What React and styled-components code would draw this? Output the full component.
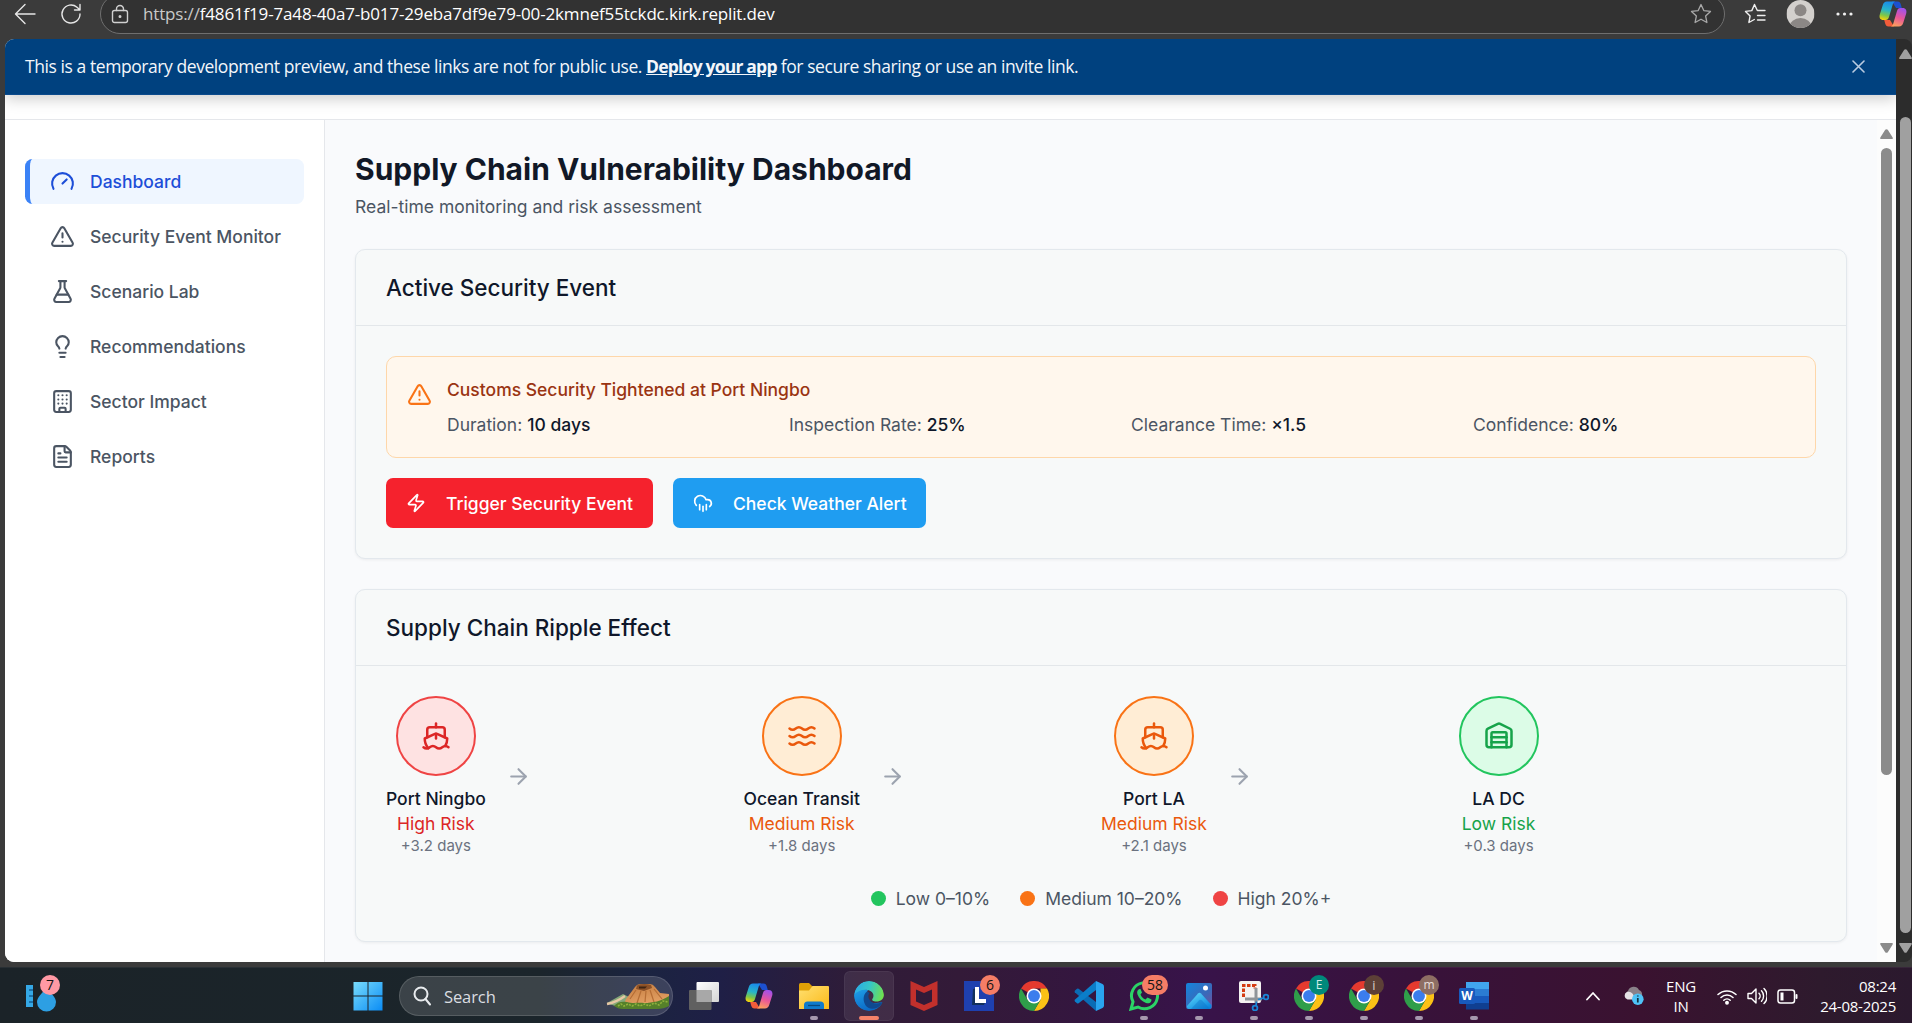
import React from "react";
import styled, { createGlobalStyle } from "styled-components";
import {
  Gauge, TriangleAlert, FlaskConical, Lightbulb, Building, FileText,
  Zap, CloudRain, Ship, Waves, Warehouse, ArrowRight,
} from "lucide-react";

const GlobalStyle = createGlobalStyle`
  * { box-sizing: border-box; }
  body {
    margin: 0;
    overflow: hidden;
    background: #3b3b3b;
    font-family: Inter, "Liberation Sans", sans-serif;
    font-size: 17.5px;
    line-height: 25px;
  }
  svg { display: block; flex-shrink: 0; }
  h1, h2, p { margin: 0; }
`;

const SYSTEM = `"Open Sans", "Noto Sans", sans-serif`;

const Screen = styled.div`
  width: 1912px;
  height: 1023px;
  display: flex;
  flex-direction: column;
  overflow: hidden;
`;

/* ---------- Browser toolbar ---------- */

const Toolbar = styled.div`
  height: 39px;
  padding: 0 5px 11px 14px;
  display: flex;
  align-items: center;
  overflow: hidden;
  background: #3b3b3b;
  flex-shrink: 0;
`;
const ToolIcons = styled.div`
  display: flex;
  align-items: center;
  gap: 24px;
  width: 86px;
`;
const AddressBar = styled.div`
  width: 1625px;
  height: 40px;
  flex-shrink: 0;
  display: flex;
  align-items: center;
  padding: 0 12px 0 10px;
  border: 1px solid #6f6f6f;
  border-radius: 20px;
  background: #323232;
`;
const Url = styled.span`
  flex: 1;
  margin-left: 14px;
  padding-bottom: 2px;
  font-family: ${SYSTEM};
  font-size: 17px;
  letter-spacing: -0.16px;
  color: #fff;
  white-space: nowrap;
`;
const Scheme = styled.span`
  color: #c9c9c9;
`;
const ToolEnd = styled.div`
  display: grid;
  grid-template-columns: 42px 50px 43px 28px;
  align-items: center;
  margin-left: 19px;
`;

/* ---------- Page frame ---------- */

const Viewport = styled.div`
  height: 923px;
  padding-left: 5px;
  display: flex;
  flex-shrink: 0;
`;
const Page = styled.div`
  width: 1891px;
  display: flex;
  flex-direction: column;
  border-radius: 9px 0 0 9px;
  overflow: hidden;
  background: #fff;
`;
const Banner = styled.div`
  height: 56px;
  flex-shrink: 0;
  display: flex;
  align-items: center;
  justify-content: space-between;
  padding: 0 31px 0 20px;
  background: #00417f;
  border-bottom: 1px solid #0b4a8c;
  box-shadow: 0 4px 14px rgba(0, 0, 0, 0.2);
  font-family: ${SYSTEM};
  font-size: 17.5px;
  letter-spacing: -0.43px;
  color: #f3f6fa;
  position: relative;
`;
const BannerLink = styled.a`
  font-weight: 700;
  letter-spacing: -0.8px;
  text-decoration: underline;
`;
const SiteHeader = styled.div`
  height: 25px;
  flex-shrink: 0;
  border-bottom: 1px solid #e5e7eb;
  box-shadow: 0 1px 2px rgba(0, 0, 0, 0.06);
`;
const Columns = styled.div`
  flex: 1;
  display: flex;
  min-height: 0;
`;
const Sidebar = styled.nav`
  width: 320px;
  padding: 39px 20px 0;
  border-right: 1px solid #e5e7eb;
  display: flex;
  flex-direction: column;
  gap: 10px;
  background: #fff;
`;
const NavItem = styled.div`
  height: 45px;
  display: flex;
  align-items: center;
  gap: 15px;
  padding-left: 20px;
  border-left: 5px solid ${(p) => (p.$active ? "#3b82f6" : "transparent")};
  border-radius: 7.5px;
  background: ${(p) => (p.$active ? "#eff6ff" : "transparent")};
  color: ${(p) => (p.$active ? "#1d4ed8" : "#4b5563")};
  font-weight: 500;
`;
const Main = styled.main`
  flex: 1;
  padding: 29px 30px 0;
  background: #f9fafc;
  display: flex;
  flex-direction: column;
  gap: 30px;
`;
const Title = styled.h1`
  font-size: 30px;
  line-height: 40px;
  font-weight: 700;
  color: #111827;
`;
const Subtitle = styled.p`
  margin-top: 5px;
  color: #4b5563;
`;

/* ---------- Cards ---------- */

const Card = styled.section`
  border: 1px solid #e3e8ed;
  border-radius: 10px;
  background: #f7f9f9;
  box-shadow: 0 1px 3px rgba(0, 0, 0, 0.06);
`;
const CardHead = styled.h2`
  height: 76px;
  padding: 0 30px;
  display: flex;
  align-items: center;
  border-bottom: 1px solid #e3e7ea;
  font-size: 22.5px;
  font-weight: 500;
  color: #0f172a;
`;
const CardBody = styled.div`
  padding: 30px;
`;
const Alert = styled.div`
  padding: 20px;
  display: flex;
  gap: 15px;
  border: 1px solid #fed7aa;
  border-radius: 10px;
  background: #fff7ed;
  color: #f97316;
  svg { margin-top: 5px; }
`;
const AlertText = styled.div`
  flex: 1;
`;
const AlertTitle = styled.div`
  font-weight: 500;
  color: #9a3412;
`;
const Facts = styled.div`
  margin-top: 10px;
  display: grid;
  grid-template-columns: repeat(4, 1fr);
  gap: 20px;
`;
const Fact = styled.div`
  color: #4b5563;
  b { font-weight: 500; color: #0f172a; }
`;
const Actions = styled.div`
  margin-top: 20px;
  display: flex;
  gap: 20px;
`;
const Action = styled.button`
  width: ${(p) => p.$w}px;
  height: 50px;
  padding: 0 20px;
  display: flex;
  align-items: center;
  gap: 20px;
  border: 0;
  border-radius: 7px;
  background: ${(p) => p.$bg};
  color: #fff;
  font: 500 17.5px Inter, sans-serif;
  white-space: nowrap;
`;

/* ---------- Ripple ---------- */

const Chain = styled.div`
  display: grid;
  grid-template-columns: repeat(4, 1fr);
`;
const Stage = styled.div`
  display: flex;
  align-items: center;
  gap: 20px;
  color: #9ca3af;
`;
const Node = styled.div`
  display: flex;
  flex-direction: column;
  align-items: center;
  white-space: nowrap;
`;
const Disc = styled.div`
  width: 80px;
  height: 80px;
  margin-bottom: 10px;
  display: flex;
  align-items: center;
  justify-content: center;
  border: 2px solid ${(p) => p.$edge};
  border-radius: 50%;
  background: ${(p) => p.$fill};
  color: ${(p) => p.$ink};
`;
const NodeName = styled.div`
  font-weight: 500;
  color: #0f172a;
`;
const Risk = styled.div`
  color: ${(p) => p.$ink};
`;
const Delay = styled.div`
  font-size: 15px;
  line-height: 20px;
  color: #6b7280;
`;
const Legend = styled.div`
  margin-top: 30px;
  display: flex;
  justify-content: center;
  gap: 30px;
  color: #4b5563;
`;
const Key = styled.div`
  display: flex;
  align-items: center;
  gap: 10px;
  &::before {
    content: "";
    width: 15px;
    height: 15px;
    border-radius: 50%;
    background: ${(p) => p.$c};
  }
`;

/* ---------- Scrollbars ---------- */

const Track = styled.div`
  width: ${(p) => p.$w}px;
  flex-shrink: 0;
  display: flex;
  flex-direction: column;
  align-items: center;
  padding: ${(p) => p.$top}px 0 9px ${(p) => p.$inset}px;
  background: ${(p) => p.$bg};
  border-radius: ${(p) => p.$r || 0};
`;
const Thumb = styled.div`
  width: 11px;
  height: ${(p) => p.$h}px;
  margin: ${(p) => p.$gap}px 0 auto;
  border-radius: 6px;
  background: ${(p) => p.$c};
`;

/* ---------- Taskbar ---------- */

const Strip = styled.div`
  height: 5px;
  flex-shrink: 0;
  background: #3b3b3b;
`;
const Taskbar = styled.div`
  height: 56px;
  flex-shrink: 0;
  display: flex;
  align-items: center;
  padding-top: 1px;
  color: #fff;
  font-family: ${SYSTEM};
  background: linear-gradient(90deg, #1b2328 0, #1b252b 540px, #1b2440 640px, #1f1f46 720px, #301c38 860px, #331a38 960px, #34163f 1080px, #38134a 1200px, #38123a 1420px, #3a1230 1640px, #2e1a2d 1820px, #2b192e 1912px);
  border-top: 1px solid rgba(255, 255, 255, 0.06);
`;
const Widgets = styled.div`
  width: 343px;
  flex-shrink: 0;
  padding-left: 16px;
`;
const Apps = styled.div`
  display: flex;
  flex-shrink: 0;
  align-items: center;
  gap: 5px;
`;
const Tile = styled.div`
  position: relative;
  width: 50px;
  height: 50px;
  flex-shrink: 0;
  display: flex;
  align-items: center;
  justify-content: center;
  border-radius: 6px;
  background: ${(p) => (p.$active ? "rgba(255,255,255,0.08)" : "transparent")};
  box-shadow: ${(p) => (p.$active ? "inset 0 0 0 1px rgba(255,255,255,0.05)" : "none")};
`;
const Running = styled.span`
  position: absolute;
  bottom: 1px;
  left: 50%;
  width: ${(p) => (p.$active ? 20 : 8)}px;
  height: 4px;
  transform: translateX(-50%);
  border-radius: 2px;
  background: ${(p) => (p.$active ? "#f48269" : "#a698ae")};
`;
const Badge = styled.span`
  position: absolute;
  top: 4px;
  left: ${(p) => p.$x}px;
  min-width: 20px;
  height: 20px;
  padding: 0 ${(p) => p.$pad || 0}px;
  display: flex;
  align-items: center;
  justify-content: center;
  border-radius: 10px;
  background: ${(p) => p.$bg};
  color: ${(p) => p.$ink || "#141414"};
  font-size: ${(p) => p.$size || 14}px;
  line-height: 20px;
`;
const SearchBox = styled.div`
  width: 274px;
  height: 40px;
  margin: 0 1px;
  flex-shrink: 0;
  padding: 0 2px 0 13px;
  display: flex;
  align-items: center;
  border: 1px solid rgba(255, 255, 255, 0.14);
  border-radius: 20px;
  background: rgba(255, 255, 255, 0.14);
  color: #dadde1;
  font-size: 16.5px;
`;
const SearchLabel = styled.span`
  flex: 1;
  margin-left: 13px;
  letter-spacing: -0.1px;
`;
const Tray = styled.div`
  flex: 1;
  display: flex;
  align-items: center;
  padding: 0 16px 0 87px;
  font-size: 15px;
  line-height: 20px;
`;
const Sync = styled.div`
  margin-left: 23px;
`;
const Language = styled.div`
  width: 30px;
  margin: 0 21px;
  text-align: center;
  letter-spacing: -0.2px;
`;
const Status = styled.div`
  display: flex;
  align-items: center;
  gap: 10px;
`;
const Clock = styled.div`
  flex: 1;
  min-width: 0;
  display: flex;
  flex-direction: column;
  align-items: flex-end;
  letter-spacing: -0.25px;
  white-space: nowrap;
`;

/* ---------- Drawings ---------- */

const line = (c = "#e6e6e6", w = 1.4) => ({
  fill: "none", stroke: c, strokeWidth: w, strokeLinecap: "round", strokeLinejoin: "round",
});

const BackIcon = () => (
  <svg width="22" height="22" {...line()}><path d="M21 11H2M11 1.500 1.500 11l9.500 9.500" /></svg>
);
const ReloadIcon = () => (
  <svg width="22" height="22" {...line()}><path d="M20 11a9 9 0 1 1-3-6.700L19.500 6.500M20 1.500v5.500h-5.500" /></svg>
);
const LockIcon = () => (
  <svg width="18" height="20" {...line("#d0d0d0")}>
    <rect x="1.500" y="6.500" width="15" height="12" rx="2" />
    <path d="M5.500 6.500V5a3.500 3.500 0 0 1 7 0v1.500" />
    <circle cx="9" cy="12.500" r="0.800" fill="#d0d0d0" />
  </svg>
);
const STAR = "M11 1.500l2.800 6.100 6.700.8-4.900 4.500 1.300 6.600-5.900-3.300-5.900 3.300 1.300-6.600L1.500 8.400l6.700-.8z";
const StarIcon = () => (
  <svg width="22" height="22" {...line("#a8a8a8", 1.3)}><path d={STAR} /></svg>
);
const FavoritesIcon = () => (
  <svg width="22" height="22" {...line("#f0f0f0")}>
    <path d="M13.200 7.200 10.500 1.500 7.800 7.600l-6.300.8 4.600 4.500-1.200 6.600 5.400-3M13.500 7.500h7.500M13.500 12.500h7.500M13.500 17h7.500" />
  </svg>
);
const Avatar = () => (
  <svg width="29" height="28" viewBox="0 0 28 28">
    <clipPath id="face"><circle cx="14" cy="14" r="14" /></clipPath>
    <g clipPath="url(#face)">
      <rect width="28" height="28" fill="#d3d0cd" />
      <circle cx="14" cy="10.300" r="6" fill="#8b8785" />
      <ellipse cx="14" cy="27" rx="11" ry="9" fill="#8b8785" />
    </g>
  </svg>
);
const DotsIcon = () => (
  <svg width="18" height="6" fill="#f0f0f0">
    <circle cx="2" cy="3" r="1.600" /><circle cx="8.500" cy="3" r="1.600" /><circle cx="15" cy="3" r="1.600" />
  </svg>
);
const CopilotIcon = ({ id, size = 28 }) => (
  <svg width={size} height={size} viewBox="0 0 28 28">
    <defs>
      <linearGradient id={id + "a"} x1="0.500" y1="0" x2="0.300" y2="1">
        <stop offset="0" stopColor="#1a8be8" /><stop offset="0.450" stopColor="#28b5c8" />
        <stop offset="0.750" stopColor="#7cc64b" /><stop offset="1" stopColor="#f5d20a" />
      </linearGradient>
      <linearGradient id={id + "b"} x1="0.600" y1="0" x2="0.300" y2="1">
        <stop offset="0" stopColor="#a251ea" /><stop offset="0.500" stopColor="#e8559a" />
        <stop offset="1" stopColor="#fca05c" />
      </linearGradient>
    </defs>
    <path d="M13 1.500h5.500c2 0 2.700 1.200 3.300 3L22.800 8H17z" fill="#1c50cf" />
    <path d="M8 1.500h8c-1.500.8-2 2-2.500 3.800L10 17c-.6 2-1.500 3-3.500 3H4.500C1 20 0 17.500.8 14.500L3.800 5C4.500 2.700 5.800 1.500 8 1.500z" fill={`url(#${id}a)`} />
    <path d="M15 26.500H9.500c-2 0-2.700-1.200-3.300-3L5.200 20H11z" fill="#f25c3a" />
    <path d="M20 26.500h-8c1.500-.8 2-2 2.500-3.800L18 11c.6-2 1.500-3 3.500-3h2c3.500 0 4.500 2.500 3.700 5.500l-3 9.500c-.7 2.300-2 3.500-4.200 3.500z" fill={`url(#${id}b)`} />
  </svg>
);
const CloseIcon = () => (
  <svg width="13" height="13" {...line("#b9cbe0", 1.6)}><path d="M1 1l11 11M12 1 1 12" /></svg>
);
const ArrowHead = ({ c, down }) => (
  <svg width="13" height="10" fill={c}>
    <path d={down ? "M.6 0h11.800q.8.7.1 1.700L7.800 9.200q-1.300 1.200-2.600 0L.5 1.700Q-.2.7.6 0z" : "M.6 10h11.800q.8-.7.1-1.700L7.800.8Q6.500-.4 5.200.8L.5 8.300Q-.2 9.300.6 10z"} />
  </svg>
);

const WeatherIcon = () => (
  <svg width="32" height="32" viewBox="0 0 32 32">
    <rect x="1" y="5" width="7" height="22" fill="#35a8e6" />
    <path d="M4 10h4M4 16h4M4 22h4" stroke="#155f96" strokeWidth="1.500" />
    <path d="M21.500 8c-4 5-9.500 9-9.500 14a9.500 9.500 0 0 0 19 0C31 17 25.500 13 21.500 8z" fill="#2d9fe3" />
  </svg>
);
const WindowsIcon = () => (
  <svg width="30" height="30">
    <defs><linearGradient id="win" x1="0" y1="0" x2="1" y2="1"><stop offset="0" stopColor="#79dcfb" /><stop offset="1" stopColor="#0a8cf5" /></linearGradient></defs>
    <path fill="url(#win)" d="M.5 1h14v13.500H.5zM15.500 1h14v13.500h-14zM.5 15.500h14v14H.5zM15.500 15.500h14v14h-14z" />
  </svg>
);
const SearchIcon = () => (
  <svg width="18" height="20" fill="none" stroke="#e8ebee" strokeWidth="2" strokeLinecap="round">
    <circle cx="8" cy="8" r="6.500" /><path d="m12.500 13 4.500 5.500" />
  </svg>
);
const LandscapeIcon = () => (
  <svg width="64" height="28" viewBox="0 0 64 28">
    <defs>
      <linearGradient id="hill" x1="0" y1="0" x2="0.300" y2="1"><stop offset="0" stopColor="#c47c3f" /><stop offset="1" stopColor="#e5a266" /></linearGradient>
    </defs>
    <path d="M1 21 17 12l12 6-10 8-10-2z" fill="#86a87a" />
    <path d="M20 17 29 5q2-3 6-3h9q3 0 5 3l5 6 9 1v9l-21 4-24-3z" fill="url(#hill)" />
    <path d="M31 3.500q6-2.500 14-.5l1 3-8 3-8-2z" fill="#8c5127" />
    <path d="M33 4.500h8l-2 2h-6z" fill="#3f2413" />
    <path d="M30 8l-6 9M35 9l-4 12M40 9l-1 11M44 8l4 12M48 7l8 10" stroke="#b56d35" strokeWidth="1.200" />
    <path d="M8 24c3-4 8-5 13-4 7 2 11 0 17 1 9 0 17-2 25-7v10c-3 2-8 3-12 3H17c-4 0-6-1-9-3z" fill="#55802a" />
    <path d="M12 24l3-2 3 2 4-2 4 2 4-2 4 2 5-2 4 2 5-3 5 2 4-4 5 1" stroke="#8fb03c" strokeWidth="1.600" strokeDasharray="2 1.200" fill="none" />
    <path d="M1 22c6-1 11-3 18-8" stroke="#e6c8a4" strokeWidth="2.400" fill="none" />
  </svg>
);
const TaskViewIcon = () => (
  <svg width="30" height="30">
    <defs><linearGradient id="tv" x1="0" y1="0" x2="1" y2="1"><stop offset="0" stopColor="#fff" /><stop offset="1" stopColor="#d5d5d5" /></linearGradient></defs>
    <rect x="7.500" y="1" width="22.500" height="20" rx="1" fill="url(#tv)" />
    <rect x="0" y="9" width="22.500" height="20" rx="1" fill="#606060" />
    <rect x="7.500" y="9" width="15" height="12" fill="#a8a8a8" />
  </svg>
);
const FolderIcon = () => (
  <svg width="30" height="30">
    <defs><linearGradient id="fo" x1="0" y1="0" x2="1" y2="1"><stop offset="0" stopColor="#ffe071" /><stop offset="1" stopColor="#fbb918" /></linearGradient></defs>
    <path d="M0 3.500Q0 2 1.500 2H10l3.500 3.500v6H0z" fill="#dfa006" />
    <path d="M0 9.500h10L13.500 5H29q1 0 1 1v22H0z" fill="url(#fo)" />
    <path d="M5 28v-4q0-3.500 3.500-3.500h13q3.500 0 3.500 3.500v4z" fill="#0f7acb" />
    <path d="M9 24.500h12" stroke="#08497f" strokeWidth="1.300" />
  </svg>
);
const EdgeIcon = () => (
  <svg width="30" height="30" viewBox="0 0 30 30">
    <defs>
      <linearGradient id="ed1" x1="0" y1="0.300" x2="1" y2="0.500"><stop offset="0" stopColor="#2aa9e8" /><stop offset="0.500" stopColor="#36c6c6" /><stop offset="1" stopColor="#6fe04f" /></linearGradient>
      <linearGradient id="ed2" x1="0" y1="0" x2="0.500" y2="1"><stop offset="0" stopColor="#1fa0e8" /><stop offset="1" stopColor="#0b68c4" /></linearGradient>
      <clipPath id="edc"><circle cx="15" cy="15" r="15" /></clipPath>
    </defs>
    <g clipPath="url(#edc)">
      <path d="M0 14C3 8 9 7 14 9c-3 4-2 12 5 13 4 .5 8-1.500 9.500-.5C27 27 21 30 15 30 6.500 30 0 23 0 14z" fill="url(#ed2)" />
      <path d="M13 10.500C9 13.500 8.500 20 12 25c3 3.500 10 4 16-1.500 1-1.300.5-2.500-1-2-5 2.200-10.500.5-12.200-4-.8-2.500-.3-4.500 1-5.500z" fill="#10498f" />
      <path d="M0 14C1 6 7 0 15 0c9 0 15 6.500 15 13.500 0 4.500-3.500 7-7.500 7-3.500 0-5-1.300-4-2.700 2.500-3.500.3-8.300-6-9C7.500 8.300 3 10.300 0 14z" fill="url(#ed1)" />
    </g>
  </svg>
);
const McAfeeIcon = () => (
  <svg width="28" height="30"><path fill="#c2302c" d="M.5 0 14 6 27.500 0v24L14 30 .5 24zM6 8.500v12L14 24l8-3.500v-12L14 12z" fillRule="evenodd" /></svg>
);
const LetterAppIcon = () => (
  <svg width="30" height="30">
    <rect width="30" height="30" fill="#1e40af" />
    <path d="M9 8l4-1v12h9l-2 5H8z" fill="#12305c" />
    <path d="M11 6h4v12h7v4H11z" fill="#fff" />
  </svg>
);
const ChromeIcon = () => (
  <svg width="30" height="30" viewBox="0 0 48 48">
    <path d="M3.200 12A24 24 0 0 1 44.800 12H24L14 18z" fill="#e53a2f" />
    <path d="M44.800 12A24 24 0 0 1 24 48L34.400 30V12z" fill="#fbc116" />
    <path d="M24 48A24 24 0 0 1 3.200 12L13.600 30 34.400 30z" fill="#2f9e4a" />
    <circle cx="24" cy="24" r="12" fill="#fff" /><circle cx="24" cy="24" r="9.500" fill="#3b7ded" />
  </svg>
);
const CodeIcon = () => (
  <svg width="30" height="30" viewBox="0 0 30 30">
    <path d="M1 9.500 3 7.800q.8-.6 1.600 0L22 21v9L.8 11.200Q.2 10.300 1 9.500z" fill="#0a6cb5" />
    <path d="M1 20.500 3 22.200q.8.600 1.600 0L22 9V0L.8 18.800Q.2 19.700 1 20.500z" fill="#0b7ec9" />
    <path d="M22 0l6.500 3q1.500.8 1.500 2.500v19q0 1.700-1.500 2.500L22 30z" fill="#29a4ef" />
  </svg>
);
const WhatsAppIcon = () => (
  <svg width="30" height="30" viewBox="0 0 30 30">
    <path d="M2 28l2-7.200A13 13 0 1 1 9 26z" fill="none" stroke="#2bd366" strokeWidth="3" />
    <path d="M10.500 8c-2 .8-3 3-2 5.500 1.500 4 4.500 7 8.500 8.500 2.500.8 4.700 0 5.300-2l.2-1.500-4-2-2 2c-2.500-1-4-2.500-5-5l1.500-2L11.500 8z" fill="#2bd366" />
  </svg>
);
const PhotosIcon = () => (
  <svg width="26" height="26">
    <defs>
      <linearGradient id="ph" x1="0" y1="0" x2="1" y2="1"><stop offset="0" stopColor="#1484dc" /><stop offset="0.600" stopColor="#3b68b8" /><stop offset="1" stopColor="#7a4d99" /></linearGradient>
      <linearGradient id="pm" x1="0" y1="0" x2="0.800" y2="1"><stop offset="0" stopColor="#64e0fd" /><stop offset="1" stopColor="#0a83dc" /></linearGradient>
    </defs>
    <rect width="26" height="26" rx="2" fill="url(#ph)" />
    <path d="M1 23 12 10.500q1.500-1.600 3 0L25.500 22v2q0 2-2 2H3q-2 0-2-2z" fill="url(#pm)" />
    <path d="M5 26l8-8.500q1.500-1.500 3 0L24 26z" fill="#0d6ec4" opacity="0.400" />
    <circle cx="19.500" cy="5" r="2.500" fill="#fff" />
  </svg>
);
const SnipIcon = () => (
  <svg width="30" height="30">
    <rect width="22" height="22" rx="2" fill="#f4f2f1" />
    <path d="M4.500 16V4.500H16v3" fill="none" stroke="#d43b12" strokeWidth="3" strokeDasharray="3.500 1.500" />
    <path d="M17 7v15M6 18h17" stroke="#8f9499" strokeWidth="3" />
    <circle cx="27" cy="16" r="2.400" fill="none" stroke="#1b86d6" strokeWidth="1.800" />
    <circle cx="16" cy="27" r="2.400" fill="none" stroke="#1b86d6" strokeWidth="1.800" />
    <path d="M19 18.500 25 17M17.500 20.500 17 25" stroke="#1b86d6" strokeWidth="1.800" />
  </svg>
);
const WordTile = styled.div`
  position: relative;
  width: 30px;
  height: 28px;
`;
const WordLetter = styled.span`
  position: absolute;
  left: 1px;
  top: 7px;
  width: 14px;
  text-align: center;
  font: 700 12px/14px "Open Sans", sans-serif;
`;
const WordIcon = () => (
  <WordTile>
    <svg width="30" height="28">
      <path d="M7 0h23v7H7z" fill="#41a5ee" /><path d="M7 7h23v7H7z" fill="#2b7cd3" />
      <path d="M7 14h23v7H7z" fill="#185abd" /><path d="M7 21h23v6.500H7z" fill="#103f91" />
      <rect x="0" y="6" width="16" height="16" rx="1.500" fill="#185abd" />
    </svg>
    <WordLetter>W</WordLetter>
  </WordTile>
);
const ChevronIcon = () => (
  <svg width="14" height="10" {...line("#fff", 1.8)}><path d="M1 8.500 7 2l6 6.500" /></svg>
);
const CloudIcon = () => (
  <svg width="22" height="22" viewBox="0 0 22 22">
    <path d="M5 14a4.500 4.500 0 0 1 0-8 6 6 0 0 1 11-1 4.800 4.800 0 0 1 0 9z" fill="#8a8189" />
    <path d="M4.500 14.500a4 4 0 0 1-.5-7.500C8 6 11 9 12 14.500z" fill="#e6e2e6" />
    <circle cx="14.800" cy="14.200" r="5.800" fill="#4fc3f7" />
    <path d="M14.800 13v4.500M14.800 10.500v1" stroke="#12303f" strokeWidth="1.700" />
  </svg>
);
const WifiIcon = () => (
  <svg width="20" height="17" {...line("#fff", 1.5)}>
    <path d="M1 6.500a13 13 0 0 1 18 0M4 9.500a8.700 8.700 0 0 1 12 0M6.800 12.300a4.600 4.600 0 0 1 6.400 0" />
    <circle cx="10" cy="14.800" r="1.200" fill="#fff" />
  </svg>
);
const VolumeIcon = () => (
  <svg width="20" height="18" {...line("#fff", 1.4)}>
    <path d="M1 6.500h3.500L9 2v14l-4.500-4.500H1zM12 6.200a4 4 0 0 1 0 5.600M14.500 3.800a7.500 7.500 0 0 1 0 10.400M17 1.500a10.500 10.500 0 0 1 0 15" />
  </svg>
);
const BatteryIcon = () => (
  <svg width="21" height="15" {...line("#fff", 1.5)}>
    <rect x="1" y="1" width="16.500" height="13" rx="2.500" />
    <rect x="3.500" y="3.500" width="3" height="8" fill="#fff" stroke="none" />
    <path d="M19.500 6v3" strokeWidth="2" />
  </svg>
);

/* ---------- Content ---------- */

const NAV = [
  [Gauge, "Dashboard"],
  [TriangleAlert, "Security Event Monitor"],
  [FlaskConical, "Scenario Lab"],
  [Lightbulb, "Recommendations"],
  [Building, "Sector Impact"],
  [FileText, "Reports"],
];
const FACTS = [
  ["Duration", "10 days"], ["Inspection Rate", "25%"], ["Clearance Time", "×1.5"], ["Confidence", "80%"],
];
const TONES = {
  High: { edge: "#ef4444", fill: "#fee2e2", ink: "#dc2626" },
  Medium: { edge: "#f97316", fill: "#ffedd5", ink: "#ea580c" },
  Low: { edge: "#22c55e", fill: "#dcfce7", ink: "#16a34a" },
};
const STAGES = [
  [Ship, "Port Ningbo", "High", "+3.2 days"],
  [Waves, "Ocean Transit", "Medium", "+1.8 days"],
  [Ship, "Port LA", "Medium", "+2.1 days"],
  [Warehouse, "LA DC", "Low", "+0.3 days"],
];
const APPS = [
  { icon: <TaskViewIcon /> },
  { icon: <CopilotIcon id="tb" /> },
  { icon: <FolderIcon />, running: true },
  { icon: <EdgeIcon />, running: true, active: true },
  { icon: <McAfeeIcon /> },
  { icon: <LetterAppIcon />, badge: "6", bg: "#f47d66", x: 26 },
  { icon: <ChromeIcon /> },
  { icon: <CodeIcon /> },
  { icon: <WhatsAppIcon />, running: true, badge: "58", bg: "#f47d66", x: 23, pad: 5 },
  { icon: <PhotosIcon />, running: true },
  { icon: <SnipIcon />, running: true },
  { icon: <ChromeIcon />, running: true, badge: "E", bg: "#00897b", ink: "#d5ece9", x: 25, size: 12 },
  { icon: <ChromeIcon />, running: true, badge: "i", bg: "#5d4037", ink: "#d9cfcb", x: 25, size: 13 },
  { icon: <ChromeIcon />, running: true, badge: "m", bg: "#8d6e63", ink: "#e8dfdb", x: 25, size: 12 },
  { icon: <WordIcon />, running: true },
];

export default function App() {
  return (
    <Screen>
      <GlobalStyle />
      <Toolbar>
        <ToolIcons><BackIcon /><ReloadIcon /></ToolIcons>
        <AddressBar>
          <LockIcon />
          <Url><Scheme>https://</Scheme>f4861f19-7a48-40a7-b017-29eba7df9e79-00-2kmnef55tckdc.kirk.replit.dev</Url>
          <StarIcon />
        </AddressBar>
        <ToolEnd><FavoritesIcon /><Avatar /><DotsIcon /><CopilotIcon id="tool" /></ToolEnd>
      </Toolbar>

      <Viewport>
        <Page>
          <Banner>
            <span>
              This is a temporary development preview, and these links are not for public use.{" "}
              <BannerLink>Deploy your app</BannerLink> for secure sharing or use an invite link.
            </span>
            <CloseIcon />
          </Banner>
          <SiteHeader />
          <Columns>
            <Sidebar>
              {NAV.map(([Icon, label], i) => (
                <NavItem key={label} $active={i === 0}><Icon size={25} />{label}</NavItem>
              ))}
            </Sidebar>
            <Main>
              <div>
                <Title>Supply Chain Vulnerability Dashboard</Title>
                <Subtitle>Real-time monitoring and risk assessment</Subtitle>
              </div>
              <Card>
                <CardHead>Active Security Event</CardHead>
                <CardBody>
                  <Alert>
                    <TriangleAlert size={25} />
                    <AlertText>
                      <AlertTitle>Customs Security Tightened at Port Ningbo</AlertTitle>
                      <Facts>
                        {FACTS.map(([k, v]) => <Fact key={k}>{k}: <b>{v}</b></Fact>)}
                      </Facts>
                    </AlertText>
                  </Alert>
                  <Actions>
                    <Action $bg="#f5222d" $w={267}><Zap size={20} />Trigger Security Event</Action>
                    <Action $bg="#1f9df1" $w={253}><CloudRain size={20} />Check Weather Alert</Action>
                  </Actions>
                </CardBody>
              </Card>
              <Card>
                <CardHead>Supply Chain Ripple Effect</CardHead>
                <CardBody>
                  <Chain>
                    {STAGES.map(([Icon, name, level, delay], i) => {
                      const t = TONES[level];
                      return (
                        <Stage key={name}>
                          <Node>
                            <Disc $edge={t.edge} $fill={t.fill} $ink={t.ink}><Icon size={30} /></Disc>
                            <NodeName>{name}</NodeName>
                            <Risk $ink={t.ink}>{level} Risk</Risk>
                            <Delay>{delay}</Delay>
                          </Node>
                          {i < STAGES.length - 1 && <ArrowRight size={25} />}
                        </Stage>
                      );
                    })}
                  </Chain>
                  <Legend>
                    <Key $c="#22c55e">Low 0–10%</Key>
                    <Key $c="#f97316">Medium 10–20%</Key>
                    <Key $c="#ef4444">High 20%+</Key>
                  </Legend>
                </CardBody>
              </Card>
            </Main>
            <Track $w={19} $top={9} $inset={0} $bg="#fcfcfc">
              <ArrowHead c="#8b8b8b" />
              <Thumb $h={627} $gap={9} $c="#8b8b8b" />
              <ArrowHead c="#8b8b8b" down />
            </Track>
          </Columns>
        </Page>
        <Track $w={16} $top={10} $inset={3} $bg="#2c2c2c" $r="0 8px 8px 0">
          <ArrowHead c="#a0a0a0" />
          <Thumb $h={816} $gap={58} $c="#a0a0a0" />
          <ArrowHead c="#a0a0a0" down />
        </Track>
      </Viewport>

      <Strip />
      <Taskbar>
        <Widgets>
          <Tile>
            <WeatherIcon />
            <Badge $x={24} $bg="#ff99a4">7</Badge>
          </Tile>
        </Widgets>
        <Apps>
          <Tile><WindowsIcon /></Tile>
          <SearchBox>
            <SearchIcon />
            <SearchLabel>Search</SearchLabel>
            <LandscapeIcon />
          </SearchBox>
          {APPS.map((a, i) => (
            <Tile key={i} $active={a.active}>
              {a.icon}
              {a.badge && <Badge $bg={a.bg} $ink={a.ink} $x={a.x} $pad={a.pad} $size={a.size}>{a.badge}</Badge>}
              {a.running && <Running $active={a.active} />}
            </Tile>
          ))}
        </Apps>
        <Tray>
          <ChevronIcon />
          <Sync><CloudIcon /></Sync>
          <Language>ENG<br />IN</Language>
          <Status><WifiIcon /><VolumeIcon /><BatteryIcon /></Status>
          <Clock><span>08:24</span><span>24-08-2025</span></Clock>
        </Tray>
      </Taskbar>
    </Screen>
  );
}
